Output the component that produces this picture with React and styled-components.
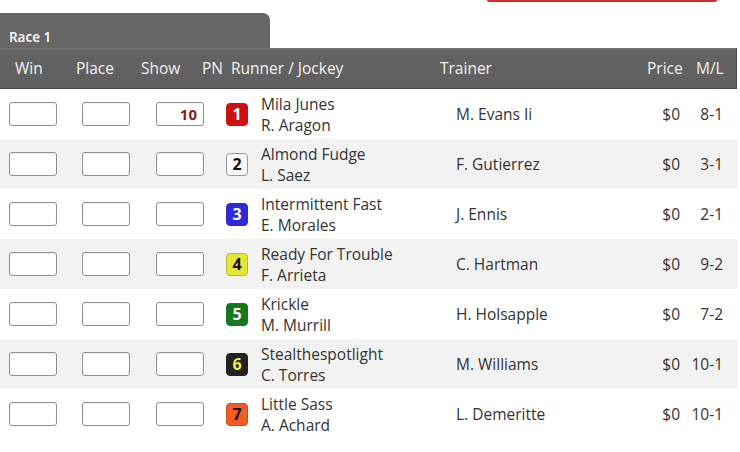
import React from "react";
import styled, { createGlobalStyle } from "styled-components";

const Global = createGlobalStyle`
  html, body { margin: 0; padding: 0; background: #fff; }
  body { font-family: "Open Sans", "Noto Sans", sans-serif; color: #333; }
`;

const Page = styled.div`
  width: 737px;
`;

const TopStrip = styled.div`
  height: 13px;
  display: flex;
`;

const RedEdge = styled.div`
  margin-left: 487px;
  width: 230px;
  height: 2px;
  background: #d3302c;
  border-radius: 0 0 2px 2px;
`;

const Tab = styled.div`
  width: 270px;
  height: 35px;
  background: #666;
  border-top-right-radius: 7px;
  padding-left: 9px;
  padding-bottom: 2px;
  display: flex;
  align-items: flex-end;
  box-sizing: border-box;
  color: #fff;
  font-size: 13.5px;
  font-weight: 600;
`;

const Header = styled.div`
  display: grid;
  grid-template-columns: 61px 65px 61px 29px 209px 207px 49px 1fr;
  height: 41px;
  align-items: center;
  background: linear-gradient(#727272 0, #636363 3px, #5f5f5f 100%);
  border-bottom: 1px solid #4a4a4a;
  border-right: 1px solid #4a4a4a;
  box-sizing: border-box;
`;

const HeadCell = styled.div`
  padding-left: 15px;
  color: #f2f2f2;
  font-size: 15.5px;
  white-space: nowrap;
`;

const Row = styled.div`
  display: grid;
  grid-template-columns: 73px 74px 74px 35px 195px 170px 66px 1fr;
  height: 50px;
  align-items: center;
  background: ${(p) => (p.$alt ? "#f2f2f2" : "#fff")};
`;

const Cell = styled.div`
  padding-left: ${(p) => p.$pl ?? 0}px;
  padding-right: ${(p) => p.$pr ?? 0}px;
  text-align: ${(p) => p.$align || "left"};
  font-size: 15.5px;
  color: #333;
  white-space: nowrap;
`;

const Box = styled.div`
  width: 48px;
  height: 24px;
  box-sizing: border-box;
  border: 1px solid #8f8f8f;
  border-radius: 3px;
  background: #fff;
  box-shadow: inset 0 1px 1px rgba(0, 0, 0, 0.06);
  display: flex;
  align-items: center;
  justify-content: flex-end;
  padding-right: 6px;
  color: #8e1b1b;
  font-weight: 700;
  font-size: 15px;
`;

const Badge = styled.div`
  width: 22px;
  height: 23px;
  box-sizing: border-box;
  border-radius: 4px;
  background: ${(p) => p.$bg};
  color: ${(p) => p.$fg};
  border: 1px solid ${(p) => p.$border || p.$bg};
  display: flex;
  align-items: center;
  justify-content: center;
  font-weight: 700;
  font-size: 16px;
  line-height: 1;
`;

const Runner = styled.div`
  padding-left: 5px;
  padding-top: 1px;
  font-size: 15.5px;
  line-height: 21px;
  color: #333;
  white-space: nowrap;
`;

const runners = [
  { pn: 1, name: "Mila Junes", jockey: "R. Aragon", trainer: "M. Evans Ii", ml: "8-1", bg: "#cc1111", fg: "#fff", show: "10" },
  { pn: 2, name: "Almond Fudge", jockey: "L. Saez", trainer: "F. Gutierrez", ml: "3-1", bg: "#fafafa", fg: "#111", border: "#999" },
  { pn: 3, name: "Intermittent Fast", jockey: "E. Morales", trainer: "J. Ennis", ml: "2-1", bg: "#2b2bd8", fg: "#fff" },
  { pn: 4, name: "Ready For Trouble", jockey: "F. Arrieta", trainer: "C. Hartman", ml: "9-2", bg: "#e6e637", fg: "#111", border: "#b8b830" },
  { pn: 5, name: "Krickle", jockey: "M. Murrill", trainer: "H. Holsapple", ml: "7-2", bg: "#16781e", fg: "#fff" },
  { pn: 6, name: "Stealthespotlight", jockey: "C. Torres", trainer: "M. Williams", ml: "10-1", bg: "#222", fg: "#f0f040" },
  { pn: 7, name: "Little Sass", jockey: "A. Achard", trainer: "L. Demeritte", ml: "10-1", bg: "#f25a26", fg: "#111", border: "#d04a1c" },
];

export default function App() {
  return (
    <Page>
      <Global />
      <TopStrip>
        <RedEdge />
      </TopStrip>
      <Tab>Race 1</Tab>
      <Header>
        <HeadCell>Win</HeadCell>
        <HeadCell>Place</HeadCell>
        <HeadCell>Show</HeadCell>
        <HeadCell>PN</HeadCell>
        <HeadCell>Runner / Jockey</HeadCell>
        <HeadCell>Trainer</HeadCell>
        <HeadCell>Price</HeadCell>
        <HeadCell>M/L</HeadCell>
      </Header>
      {runners.map((r, i) => (
        <Row key={r.pn} $alt={i % 2 === 1}>
          <Cell $pl={9}><Box /></Cell>
          <Cell $pl={9}><Box /></Cell>
          <Cell $pl={9}><Box>{r.show}</Box></Cell>
          <Cell $pl={5}>
            <Badge $bg={r.bg} $fg={r.fg} $border={r.border}>{r.pn}</Badge>
          </Cell>
          <Runner>
            <div>{r.name}</div>
            <div>{r.jockey}</div>
          </Runner>
          <Cell $pl={5}>{r.trainer}</Cell>
          <Cell $align="right" $pr={7}>$0</Cell>
          <Cell $align="right" $pr={14}>{r.ml}</Cell>
        </Row>
      ))}
    </Page>
  );
}
